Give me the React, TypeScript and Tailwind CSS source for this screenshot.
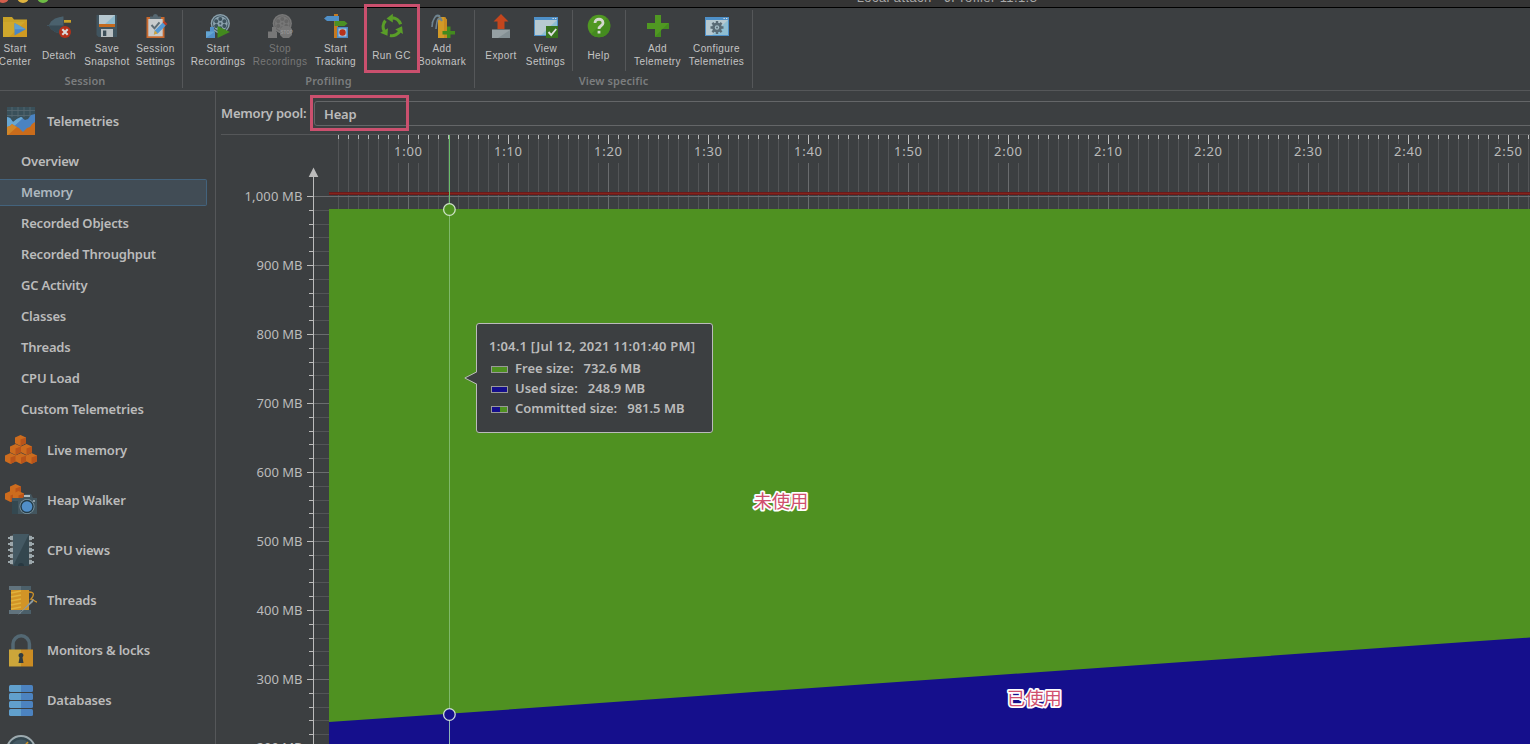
import React from "react";

type Kids = { children: React.ReactNode };

const lucida = "font-['Noto_Sans',sans-serif]";

function Ico({ children }: Kids) {
  return (
    <svg width="24" height="24" viewBox="0 0 24 24" className="block shrink-0 overflow-visible">
      {children}
    </svg>
  );
}

function Reel({ gray }: { gray?: boolean }) {
  const c = gray ? "#777777" : "#8ba1ad";
  const d = gray ? "#666666" : "#3d525d";
  return (
    <g>
      <circle cx="14.3" cy="9.6" r="9.6" fill={c} />
      <circle cx="14.3" cy="9.6" r="8.2" fill={d} />
      <circle cx="14.3" cy="9.6" r="7.3" fill={c} />
      {[0, 60, 120, 180, 240, 300].map((a) => (
        <circle key={a} cx="14.3" cy="4.9" r="2" fill={d} transform={`rotate(${a} 14.3 9.6)`} />
      ))}
      <circle cx="14.3" cy="9.6" r="1.1" fill={d} />
    </g>
  );
}

const icons: Record<string, React.ReactNode> = {
  folder: (
    <Ico>
      <path d="M0 3h9l2 2.5h13V23H0z" fill="#c9a227" />
      <path d="M0 8h24v15H0z" fill="#d0a82c" />
      <path d="M24 6v17H6z" fill="#cf9a22" />
      <path d="M11.5 9v12.5L22.8 15.3z" fill="#4a86c6" />
      <path d="M11.5 9v6.3h11.3z" fill="#609fce" />
    </Ico>
  ),
  detach: (
    <Ico>
      <path d="M0 11h2l2-3.500 4-3 5-1.500h1.500V2.500h2V21h-2v-1.500H13L8 18l-4-3-2-3H0z" fill="#4a616d" />
      <path d="M0 11.500h16.500V21h-2v-1.500H13L8 18l-4-3-2-3H0z" fill="#384b55" />
      <path d="M17 6h7v2.7h-7z" fill="#c9a227" />
      <circle cx="18" cy="18" r="6" fill="#b53019" />
      <path d="m15.3 15.3 5.4 5.4m0-5.4-5.4 5.4" stroke="#dadada" strokeWidth="2.1" />
    </Ico>
  ),
  save: (
    <Ico>
      <path d="M1.5 1H22v22H3.5l-2-2z" fill="#40545f" />
      <path d="M4 1h16v12H4z" fill="#b6c7cf" />
      <path d="M20 1v10H9z" fill="#8db9cc" />
      <path d="M4 10h16v3H4z" fill="#c46a1e" />
      <path d="M6 15h12v8H6z" fill="#b8bfc2" />
      <path d="M8 16.5h3.3v5.5H8z" fill="#3d4f59" />
    </Ico>
  ),
  clipboard: (
    <Ico>
      <path d="M2.5 3h18v21h-18z" fill="#c8692e" />
      <path d="M4.3 5h14.4v17.3H4.3z" fill="#c9cccd" />
      <path d="M6 2.5h3a2.5 2.5 0 0 1 5 0h3V5H6z" fill="#566872" />
      <path d="m7.5 11 3 3.3 5-6" fill="none" stroke="#5e6d75" strokeWidth="2" />
      <path d="m9.8 20.5 1-4 8-8 3 3-8 8z" fill="#5498d3" />
      <path d="m9.8 20.5 1-4 3 3z" fill="#d5a439" />
      <path d="m18.8 8.5 1.6-1.6 3 3-1.6 1.6z" fill="#bb3a22" />
    </Ico>
  ),
  rec: (
    <Ico>
      <Reel />
      <path d="M4 13h4v5H4zM0 17.5h9V24H0z" fill="#518fc9" />
      <path d="M0 17.5h9L0 24z" fill="#64a5d2" />
      <path d="M11.5 12v12L24 18z" fill="#438a1e" />
    </Ico>
  ),
  stop: (
    <Ico>
      <Reel gray />
      <path d="M4 13h4v5H4zM0 17.5h9V24H0z" fill="#777777" />
      <path d="M15 12h6l3 3v6l-3 3h-6l-3-3v-6z" fill="#777777" />
      <text x="12.600" y="19.800" fontSize="4.500" fontWeight="700" fill="#959595" fontFamily="Liberation Sans">STOP</text>
    </Ico>
  ),
  track: (
    <Ico>
      <path d="M10 0h4v24h-4z" fill="#c67a20" />
      <path d="M0 4.5 3 2h12v5H3z" fill="#5090c8" />
      <path d="M10.5 7h10l3 2.5-3 2.5h-10z" fill="#4b9124" />
      <path d="M13 13h11v11H13z" fill="#4c8ac6" />
      <path d="M14.5 14.5h8v8h-8z" fill="#a9c3d6" />
      <circle cx="18.5" cy="18.5" r="3.2" fill="#b8321a" />
    </Ico>
  ),
  gc: (
    <Ico>
      {[0, 120, 240].map((a) => (
        <g key={a} transform={`rotate(${a} 12 12.800)`}>
          <path d="M11.500 3.900A9.200 9.200 0 0 1 20.600 10.200" fill="none" stroke="#5a9e28" strokeWidth="3.200" />
          <path d="M6.500 4.400 12.800-.3 12.800 8.600z" fill="#5a9e28" />
        </g>
      ))}
    </Ico>
  ),
  bookmark: (
    <Ico>
      <path d="M9 3h6l2 3v18H8V5z" fill="#d29a27" />
      <path d="M14 3h1l2 3v18h-3z" fill="#c88a21" />
      <path d="M12 7C10-1 3 0 2 13M12 7C8 2 7 5 6 15M10 2C5-1 4 6 2 9" fill="none" stroke="#6f8490" strokeWidth="1.6" />
      <path d="M17 12.5h3.5V17H25v3.5h-4.500V24H17v-3.500h-4.500V17H17z" fill="#438a1e" />
    </Ico>
  ),
  export: (
    <Ico>
      <path d="M12 0 19.500 7.500h-4V15h-7V7.500h-4z" fill="#c4461d" />
      <path d="M3 15.500h18V24H3z" fill="#96a0a3" />
      <path d="M21 16v8H9z" fill="#838f93" />
    </Ico>
  ),
  view: (
    <Ico>
      <path d="M0 3h24v19H0z" fill="#4e90c8" />
      <path d="M1 6h22v15H1z" fill="#b7c9d0" />
      <path d="M23 6v15H7z" fill="#8fbed2" />
      <path d="M18.500 4h1.300v1h-1.300zM21 4h1.300v1H21z" fill="#e0e0e0" />
      <path d="M12 12h12v12H12z" fill="#37731d" />
      <path d="m14.500 18 2.700 3 5-6" fill="none" stroke="#e0e0e0" strokeWidth="1.900" />
    </Ico>
  ),
  help: (
    <Ico>
      <circle cx="12" cy="12" r="11.300" fill="#509822" />
      <path d="M20 4A11.300 11.300 0 0 1 4 20z" fill="#448b1f" />
      <path d="M8 9c0-5 8-5 8 0 0 3-4 2.500-4 6" fill="none" stroke="#d4d8d0" strokeWidth="2.800" />
      <path d="M10.600 16.800h2.800v2.700h-2.800z" fill="#d4d8d0" />
    </Ico>
  ),
  plus: (
    <Ico>
      <path d="M9 1h6v8h8v6h-8v8H9v-8H1V9h8z" fill="#509822" />
      <path d="M23 9v6h-8v8H9v-.5L22.500 9z" fill="#448b1f" />
    </Ico>
  ),
  configure: (
    <Ico>
      <path d="M0 3h24v19H0z" fill="#4e90c8" />
      <path d="M1 6h22v15H1z" fill="#b7c9d0" />
      <path d="M23 6v15H7z" fill="#8fbed2" />
      <path d="M18.500 4h1.300v1h-1.300zM21 4h1.300v1H21z" fill="#e0e0e0" />
      {[0, 45, 90, 135].map((a) => (
        <path key={a} d="M10.800 7h2.400v13h-2.400z" fill="#596b75" transform={`rotate(${a} 12 13.500)`} />
      ))}
      <circle cx="12" cy="13.500" r="3.500" fill="none" stroke="#596b75" strokeWidth="2.600" />
      <circle cx="12" cy="13.500" r="2.200" fill="#a5bdc6" />
      <circle cx="12" cy="13.500" r="1" fill="#596b75" />
    </Ico>
  ),
};

function Tool({ icon, lines, box, dim }: { icon: string; lines: string[]; box: string; dim?: boolean }) {
  return (
    <div className={`flex shrink-0 flex-col items-center pt-[4px] ${box}`}>
      {icons[icon]}
      <div
        className={`mt-1 flex h-[26px] flex-col items-center justify-center whitespace-nowrap font-['Liberation_Sans',sans-serif] text-[10px] leading-[13px] tracking-[0.4px] ${
          dim ? "text-[#777777]" : "text-[#c4c4c4]"
        }`}
      >
        {lines.map((l) => (
          <span key={l}>{l}</span>
        ))}
      </div>
    </div>
  );
}

function Group({ label, width, labelBox = "", children }: Kids & { label: string; width: string; labelBox?: string }) {
  return (
    <div className={`flex shrink-0 flex-col ${width}`}>
      <div className="flex h-[64px]">{children}</div>
      <div className={`${lucida} ${labelBox} text-center text-[11px] leading-[18px] font-semibold tracking-[0.1px] text-[#7b7d7e]`}>{label}</div>
    </div>
  );
}

function Cube({ x, y }: { x: number; y: number }) {
  return (
    <g transform={`translate(${x} ${y})`}>
      <path d="M0 2.500 5.500 0 11 2.500v5.800L5.500 11 0 8.300z" fill="#cd6c1e" />
      <path d="M5.500 4.500 11 2.500v5.800L5.500 11z" fill="#b9541a" />
    </g>
  );
}

function SideIcon({ children }: Kids) {
  return (
    <svg width="34" height="34" viewBox="0 0 34 34" className="mr-2 ml-[5px] block shrink-0">
      {children}
    </svg>
  );
}

function Section({ label, children }: Kids & { label: string }) {
  return (
    <div className="flex h-[50px] shrink-0 items-center">
      <SideIcon>{children}</SideIcon>
      <span className="pt-[2px] whitespace-nowrap">{label}</span>
    </div>
  );
}

const telemetryItems = [
  "Overview",
  "Memory",
  "Recorded Objects",
  "Recorded Throughput",
  "GC Activity",
  "Classes",
  "Threads",
  "CPU Load",
  "Custom Telemetries",
];

function Sidebar() {
  return (
    <nav className={`flex w-[216px] shrink-0 flex-col overflow-hidden border-r border-[#555759] pt-[5px] ${lucida} text-[13px] font-semibold tracking-[-0.2px] text-[#bbbbbb]`}>
      <Section label="Telemetries">
        <path d="M2 3h28v28H2z" fill="#39505a" />
        <path d="M2 6.500h28M2 11.500h28M7 3v10M13 3v10M19 3v10M25 3v10" stroke="#596a72" strokeWidth=".8" />
        <path d="m2 13 3 1 3 4 4-3 4-2 4 3 3-1 3-4 4-1v21H2z" fill="#4a83c2" />
        <path d="m2 13 3 1 3 4 4-3 4-2 2 1L4 27H2z" fill="#68a7d2" />
        <path d="m2 23 3-1 2-2 3 2 4 2 4 4 4-4 3-1 2-3 3-2v13H2z" fill="#ca6c1b" />
        <path d="m2 23 3-1 2-2 3 2 2 1-9 8H2z" fill="#d0872a" />
      </Section>
      {telemetryItems.map((t) => (
        <div key={t} className="flex h-[31px] shrink-0 items-center">
          <div
            className={`flex h-[27px] w-[207px] items-center rounded-r-[2px] border border-l-0 pl-[21px] whitespace-nowrap ${
              t === "Memory" ? "border-[#43637d] bg-[#414c55] text-[#aeb8bf]" : "border-transparent"
            }`}
          >
            {t}
          </div>
        </div>
      ))}
      <Section label="Live memory">
        <Cube x={10} y={2} />
        <Cube x={5} y={11} />
        <Cube x={16} y={11} />
        <Cube x={0} y={20} />
        <Cube x={10.5} y={20} />
        <Cube x={21} y={20} />
      </Section>
      <Section label="Heap Walker">
        <Cube x={5} y={1} />
        <Cube x={0} y={8} />
        <Cube x={8} y={8} />
        <path d="M7 15h11l2-4h6l2 4h4v16H7z" fill="#43565f" />
        <path d="M7 18h6v13H7z" fill="#344850" />
        <path d="M19 12h6v2h-6z" fill="#aebdc2" />
        <circle cx="22" cy="23.500" r="7.500" fill="#8099a5" />
        <circle cx="22" cy="23.500" r="6.700" fill="#243b47" />
        <circle cx="22" cy="23.500" r="5.300" fill="#518fc9" />
        <circle cx="29" cy="18" r="1" fill="#a5b2b8" />
      </Section>
      <Section label="CPU views">
        {[4, 10, 16, 22, 28].map((y) => (
          <path key={y} d={`M3 ${y}h2v-1l4-.5v5l-4-.5v-1H3zM29 ${y}h-2v-1l-4-.5v5l4-.5v-1h2z`} fill="#9ba6aa" />
        ))}
        <path d="M8 1h16v32H8z" fill="#445963" />
        <path d="M24 1v32H8z" fill="#34474f" />
        <path d="M13 33a3 3 0 0 1 6 0z" fill="#283941" />
      </Section>
      <Section label="Threads">
        <path d="M4 3h22v4H4zM4 27h22v4H4z" fill="#61737d" />
        <path d="M16 3h10v4H16zM16 27h10v4H16z" fill="#4b5f69" />
        <path d="M6 7h18v20H6z" fill="#d29426" />
        <path d="m6 10 10-2m-10 6 10-2m-10 6 10-2m-10 6 10-2m-10 6 10-2" stroke="#e1b23c" strokeWidth="1.500" />
        <path d="M24 9c7 0 4 5 2 7 2 0 4 3 6 3" fill="none" stroke="#cd912a" strokeWidth="1.300" />
        <path d="M12.500 32.500 27 17l2-1-1 3z" fill="#8c9ba2" />
      </Section>
      <Section label="Monitors &amp; locks">
        <path d="M8 18v-7a8.200 8.200 0 0 1 16.400 0v7" fill="none" stroke="#536873" strokeWidth="3.500" />
        <path d="M4 16.500h12v17H4z" fill="#cca63a" />
        <path d="M16 16.500h12v17H16z" fill="#cb8c23" />
        <path d="M18.500 22.500a2.500 2.500 0 1 0-4 2L13.500 30h5l-1-5.500z" fill="#303b40" />
      </Section>
      <Section label="Databases">
        {[2, 10, 18, 26].map((y) => (
          <g key={y}>
            <rect x="4" y={y} width="24" height="7" rx="1.500" fill="#4c83c0" />
            <path d={`M5.500 ${y}H16v7H5.500L4 ${y + 5.5}v-4z`} fill="#61a0cc" />
          </g>
        ))}
      </Section>
      <Section label="">
        <circle cx="16" cy="17" r="14" fill="#34474f" stroke="#9daaaf" strokeWidth="2" />
        <circle cx="16" cy="17" r="10.500" fill="#445963" />
        <path d="m16 17 7-8" stroke="#d29426" strokeWidth="1.500" />
      </Section>
    </nav>
  );
}

// Chart coordinates: origin is the window's (216, 135).
const OX = 216;
const OY = 135;
const secondTicks = Array.from({ length: 120 }, (_, i) => i).map((i) => ({ x: 338 + i * 10, major: (i - 7) % 10 === 0 }));
const timeLabels = ["1:00", "1:10", "1:20", "1:30", "1:40", "1:50", "2:00", "2:10", "2:20", "2:30", "2:40", "2:50"];
const memTicks = Array.from({ length: 40 }, (_, i) => ({ y: Math.round(196 + i * 13.8), major: i % 5 === 0 }));
const memLabels = ["1,000 MB", "900 MB", "800 MB", "700 MB", "600 MB", "500 MB", "400 MB", "300 MB", "200 MB"];

function Chart() {
  return (
    <svg width="1314" height="609" viewBox={`${OX} ${OY} 1314 609`} className="block">
      <g shapeRendering="crispEdges">
        {secondTicks.map(({ x, major }) => (
          <g key={x}>
            <rect x={x} y={139} width="1" height="71" fill={major ? "#6a6c6e" : "#535557"} />
            <rect x={x} y={135} width="1" height={major ? 9 : 4} fill="#bbbbbb" />
          </g>
        ))}
        {timeLabels.map((t, i) => (
          <rect key={t} x={394 + i * 100} y={144} width="29" height="19" fill="#3c3f41" />
        ))}
        {memTicks.map(({ y, major }, i) => (
          <g key={y}>
            <rect x={314} y={y} width={i === 0 ? 1216 : 15} height="1" fill={major ? "#6a6c6e" : "#535557"} />
            <rect x={major ? 307 : 309} y={y} width={major ? 7 : 5} height="1" fill="#bbbbbb" />
          </g>
        ))}
        <rect x={313} y={176} width="1" height="568" fill="#bbbbbb" />
        <rect x={329} y={192} width="1201" height="3" fill="#6a1a1b" />
        <rect x={329} y={193} width="1201" height="1" fill="#83241a" />
        <rect x={329} y={209} width="1201" height="535" fill="#4f9121" />
      </g>
      <path d="M313.500 167.500 318.300 177H308.700z" fill="#bbbbbb" />
      <path d="M329 722 449 713.800 730 693.700 1080 669.200 1530 637.500V744H329z" fill="#150f8c" />
      <rect x={449} y={135} width="1" height="579" fill="#7fb86a" />
      <rect x={449} y={135} width="1" height="74" fill="#69bd69" />
      <rect x={449} y={714} width="1" height="30" fill="#8fb6b4" />
      <circle cx="449.400" cy="209.500" r="5.800" fill="#4f9121" stroke="#cfe3c8" strokeWidth="1.300" />
      <circle cx="449.400" cy="714.500" r="5.800" fill="#150f8c" stroke="#cfdcd8" strokeWidth="1.300" />
      <g fontFamily="'Noto Sans', sans-serif" fontSize="13" fill="#bbbbbb">
        {timeLabels.map((t, i) => (
          <text key={t} x={408 + i * 100} y={156} textAnchor="middle" textLength="28">{t}</text>
        ))}
        {memLabels.map((t, i) => (
          <text key={t} x={302.5} y={(i === 8 ? 200 : 201) + i * 69} textAnchor="end" textLength={i === 0 ? 58 : 46}>{t}</text>
        ))}
      </g>
      <g fontFamily="'Noto Sans CJK SC', sans-serif" fontSize="18.300" fill="#d0506e" stroke="#ffffff" strokeWidth="3.500" strokeLinejoin="round" paintOrder="stroke">
        <text x="753.500" y="508">未使用</text>
        <text x="1007" y="705">已使用</text>
      </g>
    </svg>
  );
}

function Tooltip() {
  const rows = [
    { a: "bg-[#4f9121]", b: "bg-[#4f9121]", label: "Free size:", value: "732.6 MB" },
    { a: "bg-[#150f8c]", b: "bg-[#150f8c]", label: "Used size:", value: "248.9 MB" },
    { a: "bg-[#150f8c]", b: "bg-[#4f9121]", label: "Committed size:", value: "981.5 MB" },
  ];
  return (
    <div className={`absolute top-[188px] left-[260px] h-[110px] w-[237px] rounded-[3px] border border-[#bbbbbb] bg-[#3c3f41] pt-[10px] pl-3 ${lucida} text-[13px] font-semibold whitespace-nowrap text-[#bbbbbb]`}>
      <svg width="13" height="12" viewBox="0 0 13 12" className="absolute top-[48px] left-[-13px]">
        <path d="M13 0 .8 6 13 12z" fill="#3c3f41" />
        <path d="M12.500 0 .8 6 12.500 12" fill="none" stroke="#bbbbbb" />
      </svg>
      <div className="h-[25px] leading-[24px] tracking-[0.2px]">1:04.1 [Jul 12, 2021 11:01:40 PM]</div>
      {rows.map((r) => (
        <div key={r.label} className="flex h-5 items-center">
          <span className="mr-[7px] ml-[2px] flex h-[7px] w-[17px] border border-[#999999]">
            <span className={`flex-1 ${r.a}`} />
            <span className={`flex-1 ${r.b}`} />
          </span>
          <span>{r.label}</span>
          <span className="ml-[10px]">{r.value}</span>
        </div>
      ))}
    </div>
  );
}

export default function App() {
  return (
    <div className="relative flex h-[744px] w-[1530px] flex-col overflow-hidden bg-[#3c3f41]">
      <header className="relative flex h-2 shrink-0 justify-center overflow-hidden border-b border-black bg-[#343434]">
        <div className="absolute top-[-9px] left-[-3px] flex gap-2">
          <span className="size-3 rounded-full bg-[#d45f4d]" />
          <span className="size-3 rounded-full bg-[#dfb33f]" />
          <span className="size-3 rounded-full bg-[#6dbb45]" />
        </div>
        <div className="relative top-[-10px] left-[182px] h-4 font-['Liberation_Sans',sans-serif] text-[13px] leading-4 tracking-[0.4px] whitespace-nowrap text-[#a8a8a8]">
          Local attach - JProfiler 11.1.3
        </div>
      </header>
      <div className="flex h-[83px] shrink-0 border-b border-[#555759] pt-[2px] [&>i]:h-[78px] [&>i]:w-px [&>i]:shrink-0 [&>i]:bg-[#555759]">
        <Group label="Session" width="w-[182px]" labelBox="pr-3">
          <Tool icon="folder" lines={["Start", "Center"]} box="-ml-px w-8" />
          <Tool icon="detach" lines={["Detach"]} box="ml-[11px] w-[34px]" />
          <Tool icon="save" lines={["Save", "Snapshot"]} box="ml-2 w-[46px]" />
          <Tool icon="clipboard" lines={["Session", "Settings"]} box="ml-[6px] w-[39px]" />
        </Group>
        <i />
        <Group label="Profiling" width="w-[291px]">
          <Tool icon="rec" lines={["Start", "Recordings"]} box="ml-2 w-[54px]" />
          <Tool icon="stop" lines={["Stop", "Recordings"]} box="ml-2 w-[54px]" dim />
          <Tool icon="track" lines={["Start", "Tracking"]} box="ml-2 w-[41px]" />
          <Tool icon="gc" lines={["Run GC"]} box="ml-4 w-[39px]" />
          <Tool icon="bookmark" lines={["Add", "Bookmark"]} box="ml-[7px] w-12" />
        </Group>
        <i />
        <Group label="View specific" width="w-[277px]">
          <Tool icon="export" lines={["Export"]} box="ml-[11px] w-[30px]" />
          <Tool icon="view" lines={["View", "Settings"]} box="ml-[11px] w-[37px]" />
          <span className="ml-2 h-[61px] w-px bg-[#555759]" />
          <Tool icon="help" lines={["Help"]} box="ml-[15px] w-[21px]" />
          <span className="ml-4 h-[61px] w-px bg-[#555759]" />
          <Tool icon="plus" lines={["Add", "Telemetry"]} box="ml-2 w-[47px]" />
          <Tool icon="configure" lines={["Configure", "Telemetries"]} box="ml-2 w-[55px]" />
        </Group>
        <i />
      </div>
      <div className="flex min-h-0 flex-1">
        <Sidebar />
        <main className="relative flex min-w-0 flex-1 flex-col">
          <div className={`ml-[5px] flex h-[44px] shrink-0 items-center border-b border-[#555759] ${lucida} text-[13px] font-semibold tracking-[-0.2px] text-[#bbbbbb]`}>
            <span className="w-[93px] pt-[3px] whitespace-nowrap">Memory pool:</span>
            <div className="-mr-1 mt-[2px] flex h-[25px] flex-1 items-center rounded-[3px] border border-[#646668] pt-[2px] pl-[9px]">Heap</div>
          </div>
          <div className="relative flex-1">
            <Chart />
            <Tooltip />
          </div>
        </main>
      </div>
      <div className="absolute top-[4px] left-[364px] h-[69px] w-[56px] border-3 border-[#cb506e]" />
      <div className="absolute top-[95px] left-[310px] h-[36px] w-[99px] border-3 border-[#cb506e]" />
    </div>
  );
}
